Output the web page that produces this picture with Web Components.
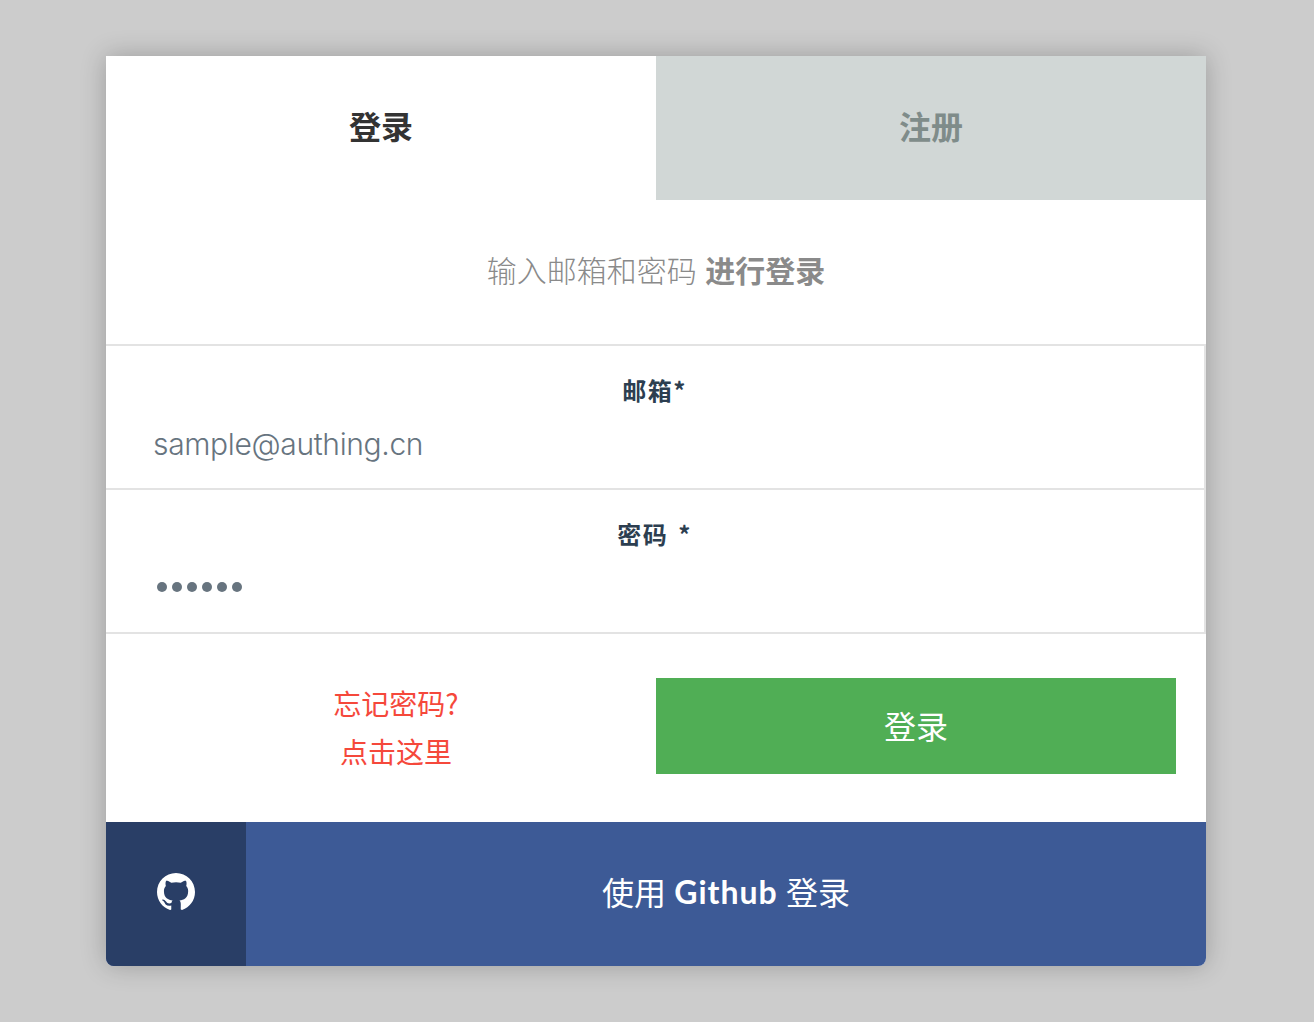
<!DOCTYPE html>
<html lang="zh">
<head>
<meta charset="utf-8">
<title>登录</title>
<style>
  html, body { margin: 0; height: 100%; }
  body {
    background: #cccccc;
    font-family: "Noto Sans CJK SC", "Inter", sans-serif;
    padding-top: 56px;
    box-sizing: border-box;
  }
</style>
</head>
<body>
<auth-card>
  <auth-tabs>
    <auth-tab active>登录</auth-tab>
    <auth-tab>注册</auth-tab>
  </auth-tabs>
  <auth-hint>输入邮箱和密码 <b>进行登录</b></auth-hint>
  <auth-field label="邮箱*" placeholder="sample@authing.cn"></auth-field>
  <auth-field label="密码 *" password="6"></auth-field>
  <auth-actions>
    <span slot="forgot">忘记密码?</span>
    <span slot="forgot">点击这里</span>
    <span slot="submit">登录</span>
  </auth-actions>
  <social-login>使用 <b>Github</b> 登录</social-login>
</auth-card>

<script>
class AuthCard extends HTMLElement {
    connectedCallback() {
        this.attachShadow({ mode: 'open' });
        this.shadowRoot.innerHTML = `
            <style>
                :host {
                    display: block;
                    width: 1100px;
                    margin-left: 106px;
                    background: #fff;
                    border-radius: 0 0 8px 8px;
                    box-shadow: 0 0 26px rgba(0, 0, 0, 0.24);
                    overflow: hidden;
                }
            </style>
            <slot></slot>
        `;
    }
}

class AuthTabs extends HTMLElement {
    connectedCallback() {
        this.attachShadow({ mode: 'open' });
        this.shadowRoot.innerHTML = `
            <style>
                :host {
                    display: grid;
                    grid-template-columns: 1fr 1fr;
                    height: 144px;
                }
            </style>
            <slot></slot>
        `;
    }
}

class AuthTab extends HTMLElement {
    connectedCallback() {
        this.attachShadow({ mode: 'open' });
        this.shadowRoot.innerHTML = `
            <style>
                :host {
                    display: flex;
                    align-items: center;
                    justify-content: center;
                    box-sizing: border-box;
                    padding-bottom: 6px;
                    font-size: 32px;
                    font-weight: 700;
                    background: #d1d7d6;
                    color: #7f8c8a;
                }
                :host([active]) {
                    background: #fff;
                    color: #333;
                }
            </style>
            <slot></slot>
        `;
    }
}

class AuthHint extends HTMLElement {
    connectedCallback() {
        this.attachShadow({ mode: 'open' });
        this.shadowRoot.innerHTML = `
            <style>
                :host {
                    display: flex;
                    align-items: center;
                    justify-content: center;
                    box-sizing: border-box;
                    height: 144px;
                    padding-bottom: 6px;
                    white-space: pre;
                    word-spacing: 2px;
                    font-size: 30px;
                    font-weight: 300;
                    color: #8a8a8a;
                }
                ::slotted(b) { font-weight: 700; }
            </style>
            <slot></slot>
        `;
    }
}

class AuthField extends HTMLElement {
    connectedCallback() {
        const label = this.getAttribute('label');
        const placeholder = this.getAttribute('placeholder');
        const dots = Number(this.getAttribute('password') || 0);
        const value = dots
            ? `<div class="dots">${'<i></i>'.repeat(dots)}</div>`
            : `<div class="value">${placeholder}</div>`;
        this.attachShadow({ mode: 'open' });
        this.shadowRoot.innerHTML = `
            <style>
                :host {
                    display: block;
                    box-sizing: border-box;
                    height: 144px;
                    border: 2px solid #e3e3e3;
                    border-width: 2px 2px 0 0;
                    padding: 28px 0 0 48px;
                }
                .label {
                    text-align: center;
                    font-size: 24px;
                    line-height: 32px;
                    font-weight: 700;
                    letter-spacing: 1.5px;
                    word-spacing: 3px;
                    white-space: pre;
                    color: #2c3e50;
                    padding-right: 49px;
                }
                .value, .dots { height: 40px; }
                .value {
                    margin: 18px 0 0 -1px;
                    font-family: "Inter", sans-serif;
                    font-size: 30px;
                    font-weight: 300;
                    letter-spacing: -0.35px;
                    line-height: 40px;
                    color: #67747f;
                }
                .dots {
                    margin-top: 17px;
                    display: flex;
                    align-items: center;
                    gap: 5px;
                    padding-left: 3px;
                }
                .dots i {
                    width: 10px;
                    height: 10px;
                    border-radius: 50%;
                    background: #67747f;
                }
            </style>
            <div class="label">${label}</div>
            ${value}
        `;
    }
}

class AuthActions extends HTMLElement {
    connectedCallback() {
        this.attachShadow({ mode: 'open' });
        this.shadowRoot.innerHTML = `
            <style>
                :host {
                    display: grid;
                    grid-template-columns: 550px 520px;
                    height: 190px;
                    box-sizing: border-box;
                    border-top: 2px solid #e3e3e3;
                    padding-top: 44px;
                }
                .forgot {
                    display: flex;
                    flex-direction: column;
                    align-items: center;
                    justify-content: center;
                    height: 96px;
                    padding: 2px 0 0 30px;
                    box-sizing: border-box;
                    font-size: 28px;
                    font-weight: 400;
                    line-height: 48px;
                    color: #f5483b;
                }
                .submit {
                    display: flex;
                    align-items: center;
                    justify-content: center;
                    box-sizing: border-box;
                    height: 96px;
                    padding-bottom: 3px;
                    background: #50ae55;
                    color: #fff;
                    font-size: 32px;
                    font-weight: 400;
                }
            </style>
            <div class="forgot"><slot name="forgot"></slot></div>
            <div class="submit"><slot name="submit"></slot></div>
        `;
    }
}

class SocialLogin extends HTMLElement {
    connectedCallback() {
        this.attachShadow({ mode: 'open' });
        this.shadowRoot.innerHTML = `
            <style>
                :host {
                    display: grid;
                    grid-template-columns: 140px 1fr;
                    height: 144px;
                    background: #3d5a96;
                    color: #fff;
                    font-size: 32px;
                    font-weight: 400;
                }
                .icon {
                    display: flex;
                    align-items: center;
                    justify-content: center;
                    background: #293e66;
                }
                svg { display: block; width: 38px; height: 38px; margin-top: -4px; }
                .label {
                    display: flex;
                    align-items: center;
                    justify-content: center;
                    box-sizing: border-box;
                    padding-bottom: 6px;
                    white-space: pre;
                    word-spacing: 1px;
                }
                ::slotted(b) {
                    font-family: "Lato", sans-serif;
                    font-weight: 700;
                    letter-spacing: 1px;
                }
            </style>
            <div class="icon">
                <svg viewBox="0 0 16 16" fill="#fff">
                    <path d="M8 0C3.58 0 0 3.58 0 8c0 3.54 2.29 6.53 5.47 7.59.4.07.55-.17.55-.38 0-.19-.01-.82-.01-1.49-2.01.37-2.53-.49-2.69-.94-.09-.23-.48-.94-.82-1.13-.28-.15-.68-.52-.01-.53.63-.01 1.08.58 1.23.82.72 1.21 1.87.87 2.33.66.07-.52.28-.87.51-1.07-1.78-.2-3.64-.89-3.64-3.95 0-.87.31-1.59.82-2.15-.08-.2-.36-1.02.08-2.12 0 0 .67-.21 2.2.82.64-.18 1.32-.27 2-.27s1.36.09 2 .27c1.53-1.04 2.2-.82 2.2-.82.44 1.1.16 1.92.08 2.12.51.56.82 1.27.82 2.15 0 3.07-1.87 3.75-3.65 3.95.29.25.54.73.54 1.48 0 1.07-.01 1.93-.01 2.2 0 .21.15.46.55.38A8.01 8.01 0 0 0 16 8c0-4.42-3.58-8-8-8z"/>
                </svg>
            </div>
            <div class="label"><slot></slot></div>
        `;
    }
}

customElements.define('auth-card', AuthCard);
customElements.define('auth-tabs', AuthTabs);
customElements.define('auth-tab', AuthTab);
customElements.define('auth-hint', AuthHint);
customElements.define('auth-field', AuthField);
customElements.define('auth-actions', AuthActions);
customElements.define('social-login', SocialLogin);
</script>
</body>
</html>
